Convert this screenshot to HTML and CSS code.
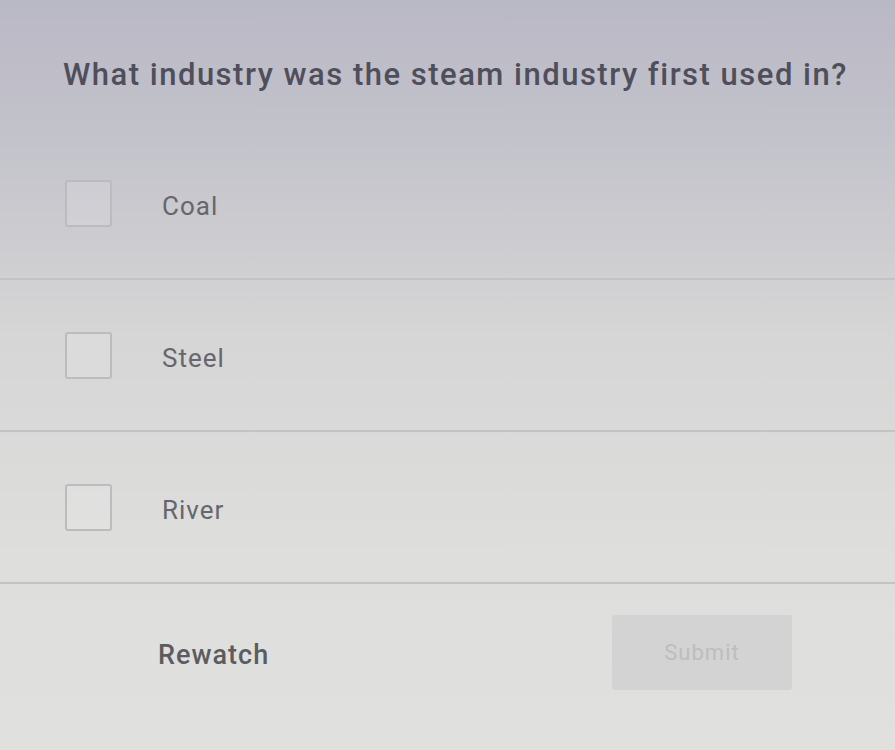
FILE: index.html
```html
<!DOCTYPE html>
<html lang="en">
<head>
    <meta charset="UTF-8">
    <meta name="viewport" content="width=device-width, initial-scale=1.0">
    <title>Quiz</title>
    <link rel="stylesheet" href="styles.css">
</head>
<body>
    <div id="quiz">
        <h1 class="question">What industry was the steam industry first used in?</h1>

        <ul class="options">
            <li class="option">
                <span class="checkbox"></span>
                <span class="label">Coal</span>
            </li>
            <li class="option">
                <span class="checkbox"></span>
                <span class="label">Steel</span>
            </li>
            <li class="option">
                <span class="checkbox"></span>
                <span class="label">River</span>
            </li>
        </ul>

        <div class="actions">
            <button class="rewatch">Rewatch</button>
            <button class="submit" disabled>Submit</button>
        </div>
    </div>
</body>
</html>
```

FILE: styles.css
```css
body {
    margin: 0;
    padding: 0;
    font-family: Roboto, "Liberation Sans", sans-serif;
    background: linear-gradient(180deg, #b9b8c5 0%, #c5c5cc 22%, #d6d6d6 45%, #dededd 75%, #e0e0de 100%);
    height: 750px;
    overflow: hidden;
}
#quiz {
    width: 895px;
}
.question {
    margin: 0;
    padding: 57px 0 0 63px;
    height: 71px;
    font-size: 31px;
    line-height: 36px;
    font-weight: 500;
    letter-spacing: 1.5px;
    color: #4f4e5b;
}
.options {
    list-style: none;
    margin: 0;
    padding: 0;
}
.option {
    display: flex;
    align-items: center;
    height: 150px;
    padding-left: 65px;
    border-bottom: 2px solid #c3c3c6;
}
.checkbox {
    width: 43px;
    height: 43px;
    border: 2px solid #bcbcbf;
    border-radius: 3px;
    background: rgba(255, 255, 255, 0.12);
}
.label {
    margin: 5px 0 0 50px;
    font-size: 26px;
    letter-spacing: 1px;
    color: #66666d;
}
.actions {
    display: flex;
    justify-content: space-between;
    align-items: center;
    padding: 31px 103px 0 158px;
}
button {
    border: none;
    font-family: inherit;
    cursor: pointer;
}
.rewatch {
    padding: 4px 0 0;
    background: none;
    font-size: 27px;
    font-weight: 500;
    letter-spacing: 1px;
    color: #5c5c60;
}
.submit {
    width: 180px;
    height: 75px;
    border-radius: 3px;
    background: #d3d3d4;
    font-size: 22px;
    letter-spacing: 1px;
    color: #bdbdbf;
}
```
